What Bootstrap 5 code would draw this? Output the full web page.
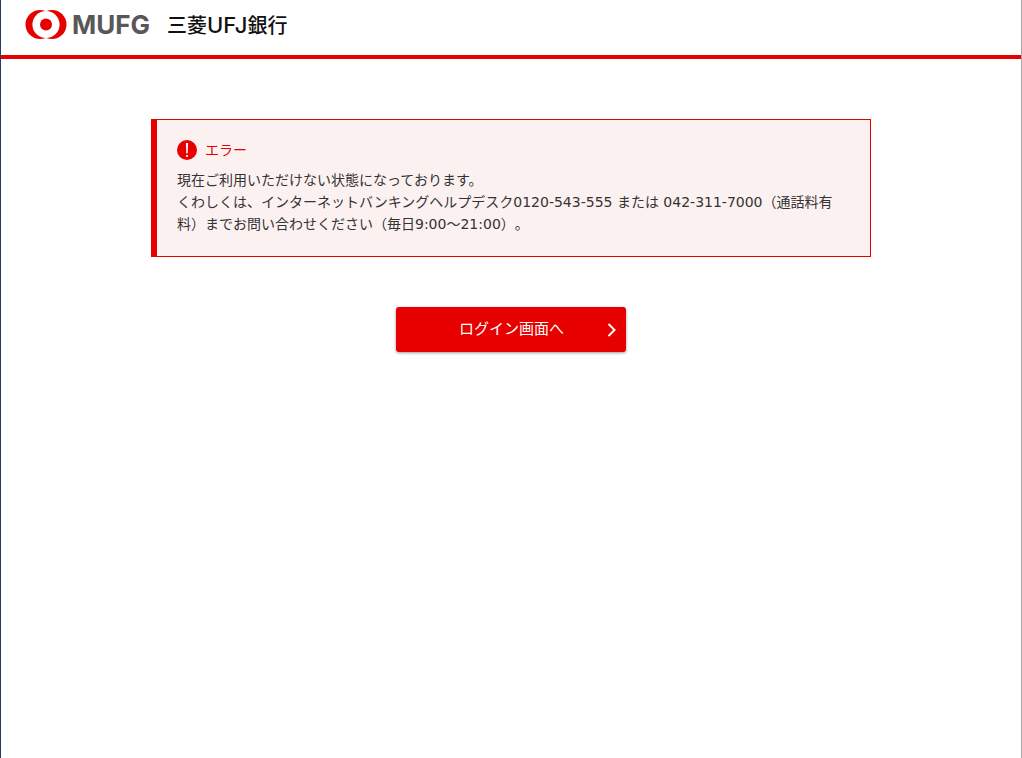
<!DOCTYPE html>
<html lang="ja">
<head>
<meta charset="utf-8">
<meta name="viewport" content="width=device-width, initial-scale=1">
<title>三菱UFJ銀行</title>
<link href="https://cdn.jsdelivr.net/npm/bootstrap@5.3.0/dist/css/bootstrap.min.css" rel="stylesheet">
<style>
  :root { --brand-red: #e60000; }
  body {
    font-family: "DejaVu Sans", "Noto Sans CJK JP", sans-serif;
    font-size: 14px;
    line-height: 22px;
    color: #333;
    text-spacing-trim: space-all;
    border-left: 1px solid #2b3a66;
    border-right: 1px solid #a6a6a6;
  }
  .site-header { border-bottom: 4px solid var(--brand-red); padding: 7px 24px 12px; }
  .brand-link { height: 36px; color: #111; }
  .brand-mark { width: 42px; height: 32px; }
  .brand-name { font: 700 26px/36px Inter, sans-serif; color: #595757; margin-left: 5px; }
  .bank-name { font: 500 20px/36px Inter, "Noto Sans CJK JP", sans-serif; margin-left: 17px; }
  .bank-latin { font-size: 22px; }
  .page-body { max-width: 720px; padding-top: 60px; }
  .error-box {
    background: #fcf1f1;
    border: 1px solid var(--brand-red);
    border-left-width: 6px;
    padding: 19px 20px 21px;
  }
  .error-title { color: var(--brand-red); font-size: 14px; font-weight: 400; line-height: 22px; margin-bottom: 8px; }
  .btn-login {
    --bs-btn-color: #fff;
    --bs-btn-bg: var(--brand-red);
    --bs-btn-hover-color: #fff;
    --bs-btn-hover-bg: #c90000;
    --bs-btn-active-color: #fff;
    --bs-btn-active-bg: #b00000;
    --bs-btn-border-width: 0;
    --bs-btn-border-radius: 3px;
    width: 230px;
    height: 45px;
    margin-top: 50px;
    padding: 0 10px 0 20px;
    font-size: 15px;
    box-shadow: 0 1px 3px rgba(0, 0, 0, .4);
  }
</style>
</head>
<body class="min-vh-100 bg-white">
<header class="site-header">
  <a href="#" class="brand-link d-flex align-items-center text-decoration-none">
    <svg class="brand-mark" viewBox="0 0 42 32" aria-hidden="true">
      <circle cx="15" cy="15.5" r="14.5" fill="#e60000"/>
      <circle cx="27" cy="15.5" r="14.5" fill="#e60000"/>
      <circle cx="21" cy="15.5" r="13.6" fill="#fff"/>
      <circle cx="21" cy="15.5" r="6" fill="#e60000"/>
    </svg>
    <span class="brand-name">MUFG</span>
    <span class="bank-name">三菱<span class="bank-latin">UFJ</span>銀行</span>
  </a>
</header>
<main class="page-body mx-auto">
  <section class="error-box" role="alert">
    <h1 class="error-title d-flex align-items-center gap-2">
      <svg width="20" height="20" viewBox="0 0 20 20" aria-hidden="true">
        <circle cx="10" cy="10" r="10" fill="#e60000"/>
        <path d="M9 3h2l-.3 10.500H9.300z" fill="#fff"/>
        <circle cx="10" cy="16" r="1.100" fill="#fff"/>
      </svg>
      <span>エラー</span>
    </h1>
    <p class="mb-0">現在ご利用いただけない状態になっております。<br>くわしくは、インターネットバンキングヘルプデスク0120-543-555 または 042-311-7000（通話料有料）までお問い合わせください（毎日9:00～21:00）。</p>
  </section>
  <div class="text-center">
    <button type="button" class="btn btn-login d-inline-flex align-items-center">
      <span class="flex-grow-1">ログイン画面へ</span>
      <svg width="9" height="14" viewBox="0 0 9 14" fill="none" stroke="#fff" stroke-width="2" aria-hidden="true"><path d="M1.500 1l6 6-6 6"/></svg>
    </button>
  </div>
</main>
<script src="https://cdn.jsdelivr.net/npm/bootstrap@5.3.0/dist/js/bootstrap.bundle.min.js"></script>
</body>
</html>
